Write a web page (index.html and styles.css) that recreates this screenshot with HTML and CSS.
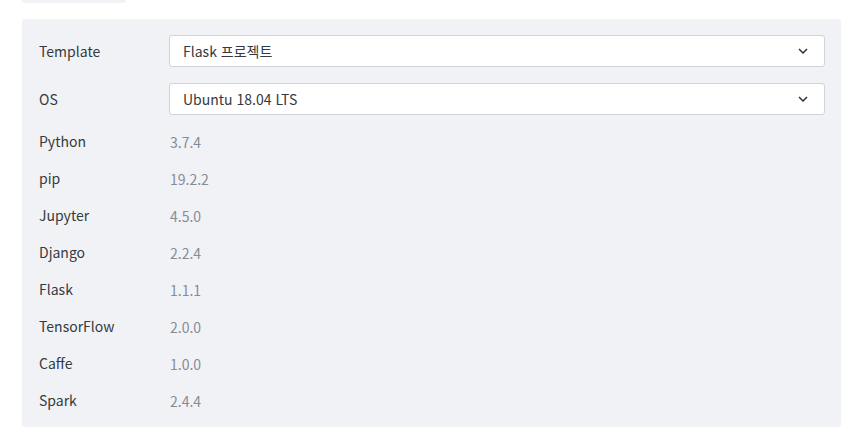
FILE: index.html
```html
<!DOCTYPE html>
<html lang="ko">
<head>
<meta charset="utf-8">
<link rel="stylesheet" href="styles.css">
</head>
<body>
<div class="tab"></div>
<div class="panel">
  <div class="row select-row">
    <div class="label">Template</div>
    <div class="select"><span>Flask 프로젝트</span>
      <svg class="chev" width="10" height="6" viewBox="0 0 10 6"><path d="M1 1l4 4 4-4" fill="none" stroke="#333" stroke-width="1.5"/></svg>
    </div>
  </div>
  <div class="row select-row">
    <div class="label">OS</div>
    <div class="select"><span>Ubuntu 18.04 LTS</span>
      <svg class="chev" width="10" height="6" viewBox="0 0 10 6"><path d="M1 1l4 4 4-4" fill="none" stroke="#333" stroke-width="1.5"/></svg>
    </div>
  </div>
  <div class="list">
    <div class="row"><div class="label">Python</div><div class="value">3.7.4</div></div>
    <div class="row"><div class="label">pip</div><div class="value">19.2.2</div></div>
    <div class="row"><div class="label">Jupyter</div><div class="value">4.5.0</div></div>
    <div class="row"><div class="label">Django</div><div class="value">2.2.4</div></div>
    <div class="row"><div class="label">Flask</div><div class="value">1.1.1</div></div>
    <div class="row"><div class="label">TensorFlow</div><div class="value">2.0.0</div></div>
    <div class="row"><div class="label">Caffe</div><div class="value">1.0.0</div></div>
    <div class="row"><div class="label">Spark</div><div class="value">2.4.4</div></div>
  </div>
</div>
</body>
</html>
```
FILE: styles.css
```css
* { box-sizing: border-box; }
html, body { margin: 0; background: #fff; }
body {
  font-family: "Noto Sans CJK KR", "Noto Sans", sans-serif;
  font-size: 14px;
  color: #343a40;
  padding: 0 13px 0 22px;
}
.tab {
  width: 104px;
  height: 3px;
  background: #f1f2f6;
  border-radius: 0 0 3px 3px;
  margin-bottom: 16px;
}
.panel {
  background: #f1f2f6;
  border-radius: 3px;
  padding: 16px 16px 15px 17px;
  height: 408px;
}
.row {
  display: flex;
  align-items: center;
}
.select-row { height: 32px; margin-bottom: 16px; }
.label { width: 130px; flex: none; line-height: 20px; padding-bottom: 1px; }
.select {
  flex: 1;
  height: 32px;
  background: #fff;
  border: 1px solid #cfd2d8;
  border-radius: 3px;
  display: flex;
  align-items: center;
  justify-content: space-between;
  padding: 0 16px 1px 13px;
}
.chev { display: block; }
.list { display: flex; flex-direction: column; gap: 15px; }
.list .row { height: 22px; padding-bottom: 1px; }
.value { color: #868c96; padding-left: 1px; }
```
